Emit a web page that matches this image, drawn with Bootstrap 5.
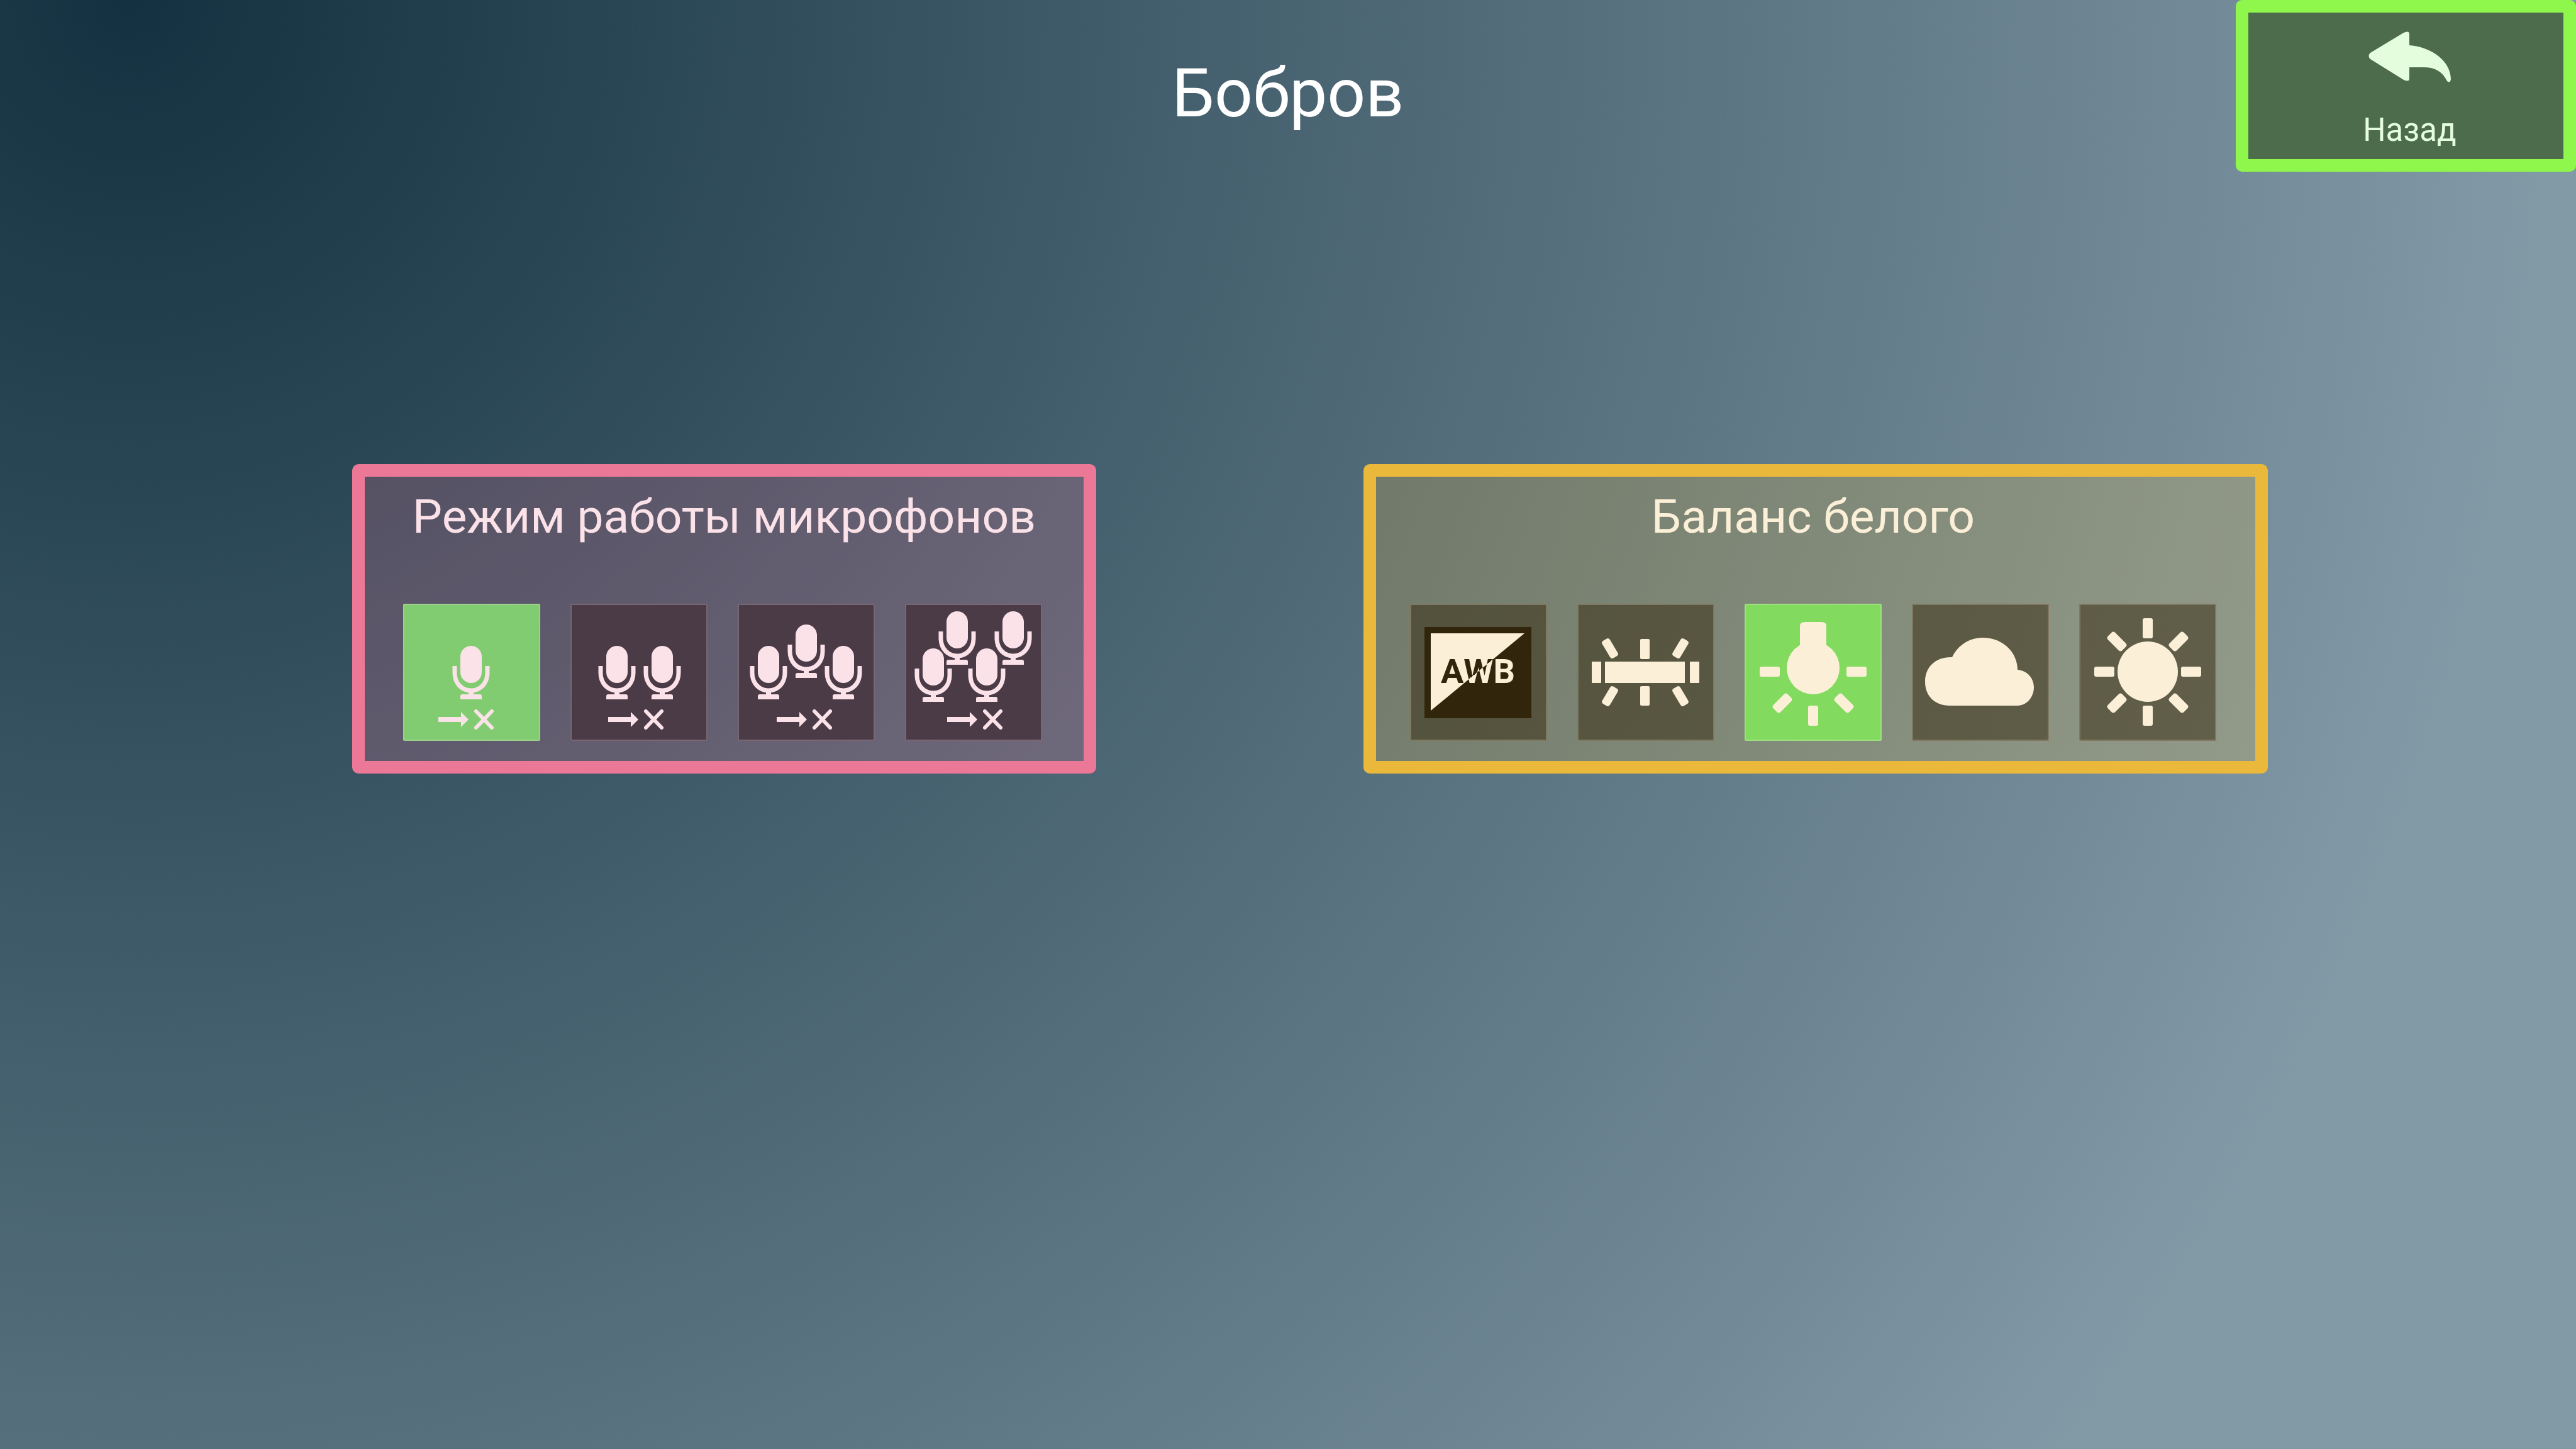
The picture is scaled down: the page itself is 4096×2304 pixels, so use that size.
<!DOCTYPE html>
<html lang="ru">
<head>
<meta charset="utf-8">
<meta name="viewport" content="width=device-width, initial-scale=1">
<title>Бобров</title>
<link href="https://cdn.jsdelivr.net/npm/bootstrap@5.3.0/dist/css/bootstrap.min.css" rel="stylesheet">
<style>
  body {
    font-family: Roboto, "Noto Sans", sans-serif;
    color: #fff;
    background: radial-gradient(circle at 5% 0, #133140 0, #8299a6 85%) no-repeat;
  }
  .topbar { display: grid; grid-template-columns: 1fr auto 1fr; height: 273px; }
  .room-title { grid-column: 2; font-size: 107px; line-height: 126px; padding-top: 86px; }
  .back-btn {
    grid-column: 3; width: 541px; height: 273px; padding: 0 0 0 12px;
    border: 20px solid #8ff74c; border-radius: 10px; background: #4d6c4c; color: #e4fddc;
    font-size: 51px; line-height: 60px;
  }
  .back-btn svg { width: 132px; height: 82px; margin-top: 30px; }
  .back-btn span { margin-top: 45px; }
  .panels { padding: 465px 0 0 70px; gap: 425px; }
  .panel { height: 492px; border: 20px solid; border-radius: 10px; padding-top: 18px; }
  .panel h2 { font-size: 75px; line-height: 90px; margin-bottom: 94px; font-weight: 400; }
  .panel-mic { width: 1183px; border-color: #eb7896; background: rgba(235, 120, 150, .22); color: #fbe1e8; }
  .panel-wb { width: 1438px; border-color: #eab83b; background: rgba(234, 184, 59, .22); color: #fbf0d7; padding-right: 8px; }
  .tiles { gap: 48px; }
  .panel-mic .tiles { padding-right: 6px; }
  .tile { width: 218px; height: 218px; padding: 0; border: 2px solid; border-radius: 2px; color: inherit; }
  .tile svg { display: block; width: 214px; height: 214px; }
  .panel-mic .tile { background: #4a3b46; border-color: #786672; }
  .panel-wb .tile { background: rgba(49, 38, 12, .5); border-color: #80795f; }
  .panel-mic .tile.is-on { background: #81cc70; border-color: #9bd08d; }
  .panel-wb .tile.is-on { background: #82da5e; border-color: #9de07f; }
  .awb-text { font: 700 54px Roboto, sans-serif; font-kerning: none; }
</style>
<script src="https://cdn.jsdelivr.net/npm/bootstrap@5.3.0/dist/js/bootstrap.bundle.min.js"></script>
</head>
<body class="min-vh-100">
<svg width="0" height="0" class="position-absolute" aria-hidden="true">
  <defs>
    <g id="mic">
      <rect x="-17" y="0" width="34" height="59" rx="17"/>
      <path d="M-26 32v11c0 16 11 28 26 28s26-12 26-28v-11" fill="none" stroke="currentColor" stroke-width="7"/>
      <path d="M-4 70h8v7h10q3 0 3 3v5h-34v-5q0-3 3-3h10z"/>
    </g>
    <g id="route">
      <path d="M0 10h36v-8l12 12-12 12v-8H0z"/>
      <path d="M60 1l25 26M85 1L60 27" stroke="currentColor" stroke-width="6" stroke-linecap="round"/>
    </g>
    <rect id="short-ray" x="-7" y="-16" width="14" height="32" rx="4"/>
    <rect id="long-ray" x="-16" y="-8" width="32" height="16" rx="4"/>
  </defs>
</svg>

<header class="topbar">
  <h1 class="room-title fw-normal text-center m-0">Бобров</h1>
  <button type="button" class="back-btn d-flex flex-column align-items-center ms-auto">
    <svg viewBox="0 0 132 82" fill="currentColor" aria-hidden="true"><path d="M3 34 56 2q9-4 9 2v18c38 3 66 27 66 54q-1 7-6 3C118 64 106 57 88 57H65v18q0 6-9 2L3 44q-5-5 0-10z"/></svg>
    <span>Назад</span>
  </button>
</header>

<main class="panels d-flex flex-wrap justify-content-center">
  <section class="panel panel-mic">
    <h2 class="text-center">Режим работы микрофонов</h2>
    <div class="tiles d-flex justify-content-center">
      <button type="button" class="tile is-on" aria-label="Один микрофон" aria-pressed="true"><svg viewBox="0 0 214 214" fill="currentColor"><use href="#mic" x="106" y="65"/><use href="#route" x="54" y="168"/></svg></button>
      <button type="button" class="tile" aria-label="Два микрофона"><svg viewBox="0 0 214 214" fill="currentColor"><use href="#mic" x="72" y="65"/><use href="#mic" x="144" y="65"/><use href="#route" x="58" y="168"/></svg></button>
      <button type="button" class="tile" aria-label="Три микрофона"><svg viewBox="0 0 214 214" fill="currentColor"><use href="#mic" x="47" y="65"/><use href="#mic" x="107" y="31"/><use href="#mic" x="166" y="65"/><use href="#route" x="60" y="168"/></svg></button>
      <button type="button" class="tile" aria-label="Четыре микрофона"><svg viewBox="0 0 214 214" fill="currentColor"><use href="#mic" x="81" y="10"/><use href="#mic" x="170" y="10"/><use href="#mic" x="43" y="69"/><use href="#mic" x="128" y="69"/><use href="#route" x="65" y="168"/></svg></button>
    </div>
  </section>

  <section class="panel panel-wb">
    <h2 class="text-center">Баланс белого</h2>
    <div class="tiles d-flex justify-content-center">
      <button type="button" class="tile" aria-label="Автоматический баланс">
        <svg viewBox="0 0 214 214">
          <defs>
            <linearGradient id="split" gradientUnits="userSpaceOnUse" x1="-17" y1="-43" x2="229" y2="255">
              <stop offset=".5" stop-color="#31260c"/><stop offset=".5" stop-color="#fbf0d7"/>
            </linearGradient>
          </defs>
          <path fill="#31260c" d="M21 35h170v145H21z"/>
          <path fill="currentColor" d="M31 45h149L31 168z"/>
          <text class="awb-text" x="47" y="124" fill="url(#split)">AWB</text>
        </svg>
      </button>
      <button type="button" class="tile" aria-label="Люминесцентная лампа">
        <svg viewBox="0 0 214 214" fill="currentColor">
          <rect x="42" y="90" width="127" height="34"/><rect x="21" y="90" width="15" height="34" rx="1"/><rect x="177" y="90" width="15" height="34" rx="1"/>
          <rect x="98" y="54" width="15" height="32" rx="2"/><rect x="98" y="129" width="15" height="31" rx="2"/>
          <use href="#short-ray" transform="translate(50 69) rotate(-31)"/><use href="#short-ray" transform="translate(162 69) rotate(31)"/>
          <use href="#short-ray" transform="translate(50 145) rotate(31)"/><use href="#short-ray" transform="translate(162 145) rotate(-31)"/>
        </svg>
      </button>
      <button type="button" class="tile is-on" aria-label="Лампа накаливания" aria-pressed="true">
        <svg viewBox="0 0 214 214" fill="currentColor">
          <path d="M86 33q0-6 8-6h26q8 0 8 6v36H86z"/><circle cx="107" cy="100" r="42"/>
          <g id="rays-low"><rect x="22" y="98" width="32" height="16" rx="3"/><rect x="160" y="98" width="32" height="16" rx="3"/><rect x="99" y="160" width="16" height="32" rx="3"/>
          <use href="#long-ray" transform="translate(58 156) rotate(-45)"/><use href="#long-ray" transform="translate(156 156) rotate(45)"/></g>
        </svg>
      </button>
      <button type="button" class="tile" aria-label="Облачно">
        <svg viewBox="0 0 214 214" fill="currentColor"><path d="M58 160C35 160 19 145 19 122S35 83 60 83h2c9-19 27-31 49-31 30 0 55 22 55 51 15 1 26 13 26 28s-11 29-26 29z"/></svg>
      </button>
      <button type="button" class="tile" aria-label="Солнечно">
        <svg viewBox="0 0 214 214" fill="currentColor">
          <circle cx="107" cy="106" r="48"/>
          <use href="#rays-low"/><rect x="99" y="21" width="16" height="32" rx="3"/>
          <use href="#long-ray" transform="translate(58 58) rotate(45)"/><use href="#long-ray" transform="translate(156 58) rotate(-45)"/>
        </svg>
      </button>
    </div>
  </section>
</main>
</body>
</html>
